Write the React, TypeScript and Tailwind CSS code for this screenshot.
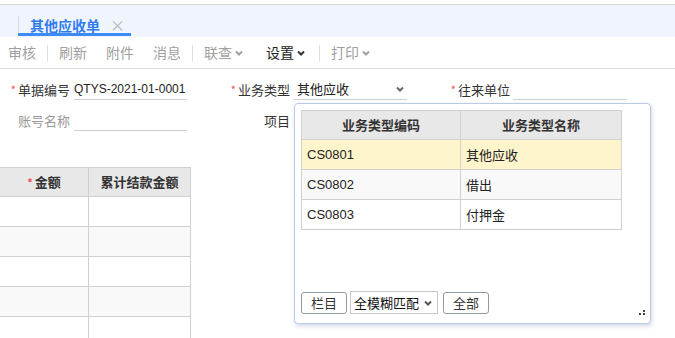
import React from "react";

const cjk = "font-['Noto_Sans_CJK_SC',sans-serif]";

function Chevron({ className = "" }: { className?: string }) {
  return (
    <svg width="8" height="6" viewBox="0 0 8 6" className={className}>
      <polyline points="1,1.5 4,4.5 7,1.5" fill="none" stroke="currentColor" strokeWidth="2" />
    </svg>
  );
}

function Sep() {
  return <span className="block h-[16px] w-px bg-[#dcdcdc]" />;
}

function Star() {
  return <span className="mr-[2px] text-[11px] text-[#f0505a]">*</span>;
}

export default function App() {
  const popupRows = [
    { code: "CS0801", name: "其他应收", bg: "bg-[#fff5cc]" },
    { code: "CS0802", name: "借出", bg: "bg-[#f9f9f9]" },
    { code: "CS0803", name: "付押金", bg: "bg-white" },
  ];

  return (
    <div className={`relative h-[338px] w-[675px] overflow-hidden bg-white text-[#333] ${cjk}`}>
      {/* tab bar */}
      <div className="h-[5px] border-b border-[#d9d9d9] bg-white" />
      <div className="flex h-[32px] bg-[#f0f5fd] pl-[18px]">
        <div className="relative flex h-[32px] w-[113px] items-center pl-[12px] pt-[7px]">
          <span className="absolute left-0 top-[11px] h-[17px] w-px bg-[#d6dbe3]" />
          <span className="text-[14px] font-bold leading-none text-[#2f7cf0]">其他应收单</span>
          <span className="ml-[10px] text-[15px] leading-none text-[#b0b4ba]">×</span>
          <span className="absolute bottom-[1px] left-0 h-[3px] w-[113px] bg-[#3d8bf5]" />
        </div>
      </div>

      {/* toolbar */}
      <div className="flex h-[32px] items-center border-b border-[#dedede] pl-[8px] text-[14px] text-[#a0a0a0]">
        <span>审核</span>
        <span className="ml-[11px]"><Sep /></span>
        <span className="ml-[11px]">刷新</span>
        <span className="ml-[19px]">附件</span>
        <span className="ml-[19px]">消息</span>
        <span className="ml-[11px]"><Sep /></span>
        <span className="ml-[11px] flex items-center">联查<Chevron className="ml-[3px]" /></span>
        <span className="ml-[23px] flex items-center text-[#222]">设置<Chevron className="ml-[3px] text-[#333]" /></span>
        <span className="ml-[14px]"><Sep /></span>
        <span className="ml-[11px] flex items-center">打印<Chevron className="ml-[3px]" /></span>
      </div>

      {/* form */}
      <div className="flex flex-col gap-[10px] pt-[10px] text-[13px]">
        <div className="flex h-[21px] items-center">
          <div className="flex w-[70px] items-center justify-end"><Star />单据编号</div>
          <div className="ml-[4px] flex h-[21px] w-[113px] items-center whitespace-nowrap border-b border-[#cfcfcf] font-['Liberation_Sans',sans-serif] text-[12px] text-[#222]">QTYS-2021-01-0001</div>
          <div className="flex w-[103px] items-center justify-end"><Star />业务类型</div>
          <div className="ml-[4px] flex h-[21px] w-[113px] items-center justify-between border-b border-[#cfcfcf] pl-[3px] pr-[3px] text-[#222]">
            其他应收<Chevron className="text-[#666]" />
          </div>
          <div className="flex w-[103px] items-center justify-end"><Star />往来单位</div>
          <div className="ml-[3px] h-[21px] w-[114px] border-b border-[#cfcfcf]" />
        </div>
        <div className="flex h-[21px] items-center">
          <div className="w-[70px] text-right text-[#999]">账号名称</div>
          <div className="ml-[4px] h-[21px] w-[113px] border-b border-[#cfcfcf]" />
          <div className="w-[103px] text-right">项目</div>
        </div>
      </div>

      {/* detail grid */}
      <div className="mt-[36px] w-[191px] border-r border-[#d0d0d0] text-[13px]">
        <div className="grid h-[30px] grid-cols-[89px_101px] border-y border-[#d0d0d0] bg-[#e8e8e8] font-bold">
          <div className="flex items-center justify-center border-r border-[#d0d0d0]"><Star />金额</div>
          <div className="flex items-center justify-center">累计结款金额</div>
        </div>
        {["bg-white", "bg-[#f9f9f9]", "bg-white", "bg-[#f9f9f9]", "bg-white"].map((bg, i) => (
          <div key={i} className={`grid h-[30px] grid-cols-[89px_101px] border-b border-[#d0d0d0] ${bg}`}>
            <div className="border-r border-[#d0d0d0]" />
            <div />
          </div>
        ))}
      </div>

      {/* dropdown popup */}
      <div className="absolute left-[294px] top-[103px] flex h-[221px] w-[357px] flex-col rounded-[4px] border border-[#b9c9e8] bg-white px-[6px] pt-[6px] shadow-[1px_2px_4px_rgba(120,140,180,0.35)]">
        <div className="w-[321px] border-l border-r border-[#d0d0d0] text-[13px]">
          <div className="grid h-[30px] grid-cols-[159px_160px] border-y border-[#d0d0d0] bg-[#e8e8e8] font-bold">
            <div className="flex items-center justify-center border-r border-[#d0d0d0]">业务类型编码</div>
            <div className="flex items-center justify-center">业务类型名称</div>
          </div>
          {popupRows.map((r) => (
            <div key={r.code} className={`grid h-[30px] grid-cols-[159px_160px] border-b border-[#d0d0d0] ${r.bg}`}>
              <div className="flex items-center border-r border-[#d0d0d0] pl-[5px] font-['Liberation_Sans',sans-serif] text-[#222]">{r.code}</div>
              <div className="flex items-center pl-[5px] text-[#222]">{r.name}</div>
            </div>
          ))}
        </div>

        <div className="mt-auto mb-[9px] flex items-center text-[13px]">
          <button className="flex h-[22px] w-[46px] items-center justify-center rounded-[3px] border border-[#8f9aa8] bg-white text-[#333]">栏目</button>
          <div className="ml-[3px] flex h-[23px] w-[88px] items-center justify-between border border-[#c8c8c8] bg-white pl-[3px] pr-[5px] text-[13px] text-[#111]">
            全模糊匹配<Chevron className="text-[#555]" />
          </div>
          <button className="ml-[5px] flex h-[22px] w-[46px] items-center justify-center rounded-[3px] border border-[#8f9aa8] bg-white text-[#333]">全部</button>
        </div>

        <svg width="8" height="6" viewBox="0 0 8 6" className="absolute bottom-[7px] right-[4px]">
          <rect x="5" y="0" width="2" height="2" fill="#444" />
          <rect x="1" y="3" width="2" height="2" fill="#444" />
          <rect x="5" y="3" width="2" height="2" fill="#444" />
        </svg>
      </div>
    </div>
  );
}
